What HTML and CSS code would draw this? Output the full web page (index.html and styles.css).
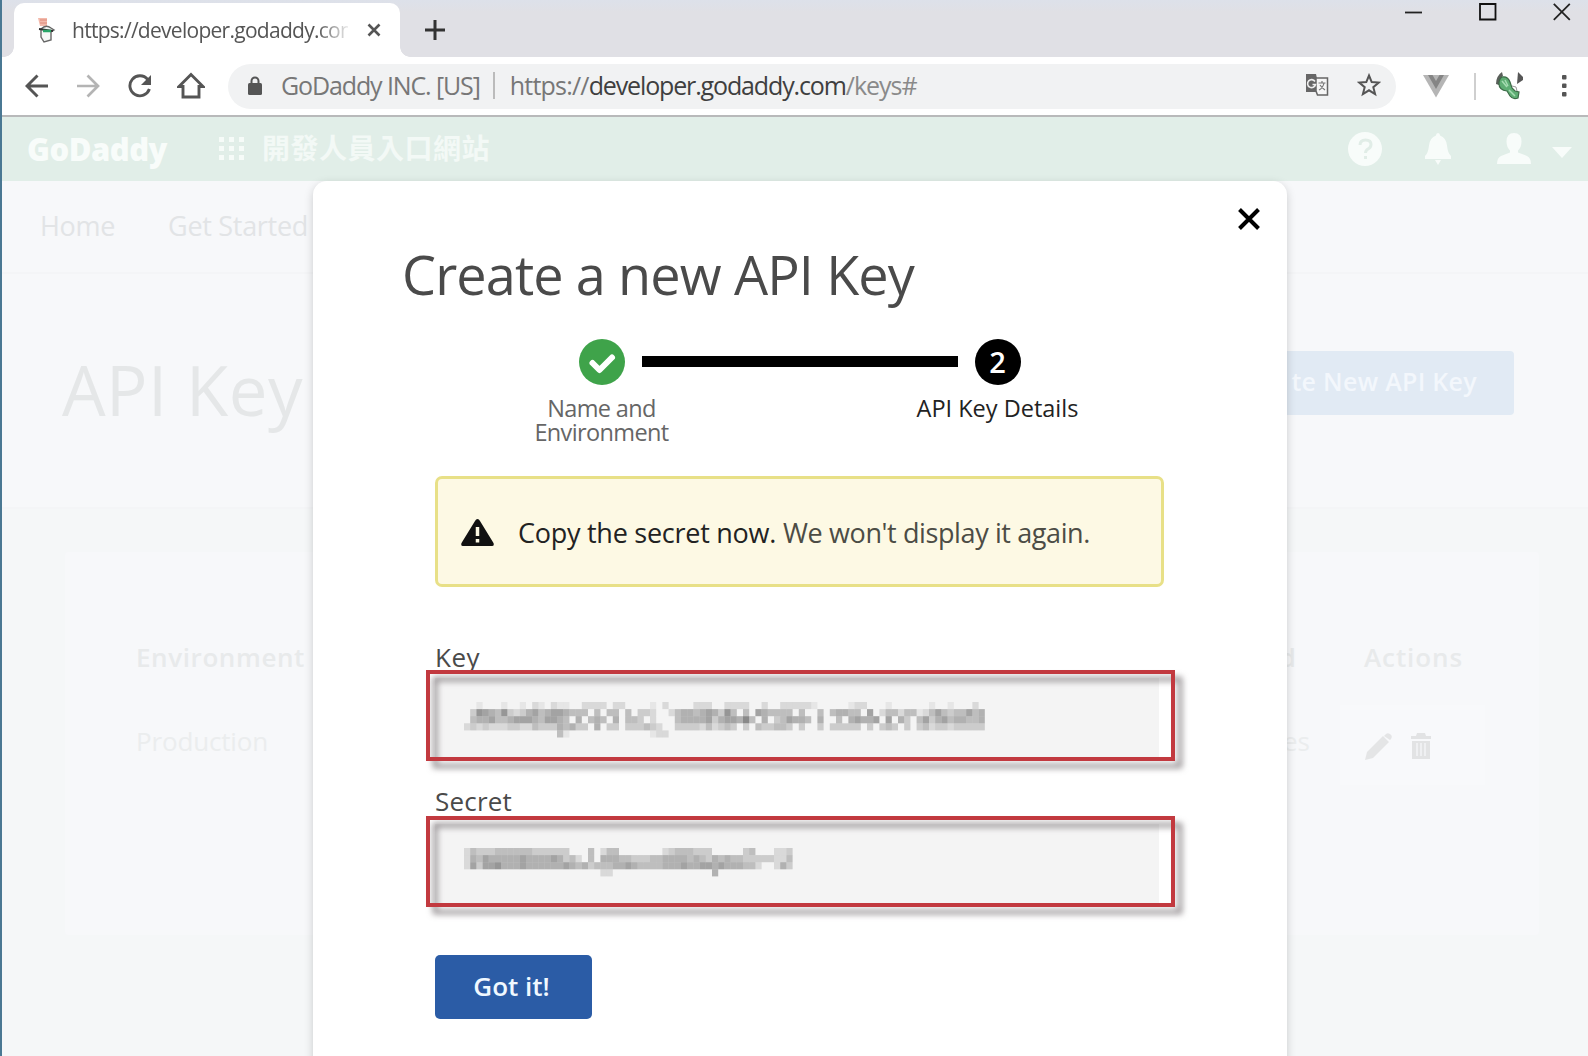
FILE: index.html
```html
<!DOCTYPE html>
<html lang="zh-Hant">
<head>
<meta charset="utf-8">
<title>GoDaddy Developer Portal</title>
<link rel="stylesheet" href="styles.css">
</head>
<body>
<div class="tabstrip">
  <div class="tab">
    <svg class="favicon" width="20" height="26" viewBox="0 0 20 26"><path d="M2 1h9v8H4z" fill="#f3b9ab"/><path d="M4 3h7M4 6h7" stroke="#dd8a7a"/><path d="M5 12q5-5 10-1l3 2-3 2v8l-7 2-3-5z" fill="#f4f7f5" stroke="#666" stroke-width="1.400"/><path d="M3 12l14 2" stroke="#333" stroke-width="2"/><path d="M7 14h8" stroke="#27a567" stroke-width="2.500"/></svg>
    <span class="tab-title">https://developer.godaddy.com</span>
    <svg class="tab-close" width="14" height="14" viewBox="0 0 14 14"><path d="M1.500 1.500l11 11M12.500 1.500l-11 11" stroke="#555" stroke-width="2.600"/></svg>
  </div>
  <svg class="tab-new" width="20" height="20" viewBox="0 0 20 20"><path d="M10 0v20M0 10h20" stroke="#333" stroke-width="3"/></svg>
  <div class="winctl">
    <svg width="18" height="18" viewBox="0 0 18 18"><path d="M0 9.500h17" stroke="#222" stroke-width="1.800"/></svg>
    <svg width="18" height="18" viewBox="0 0 18 18"><path d="M1 1h15.500v15.500H1z" fill="none" stroke="#111" stroke-width="1.800"/></svg>
    <svg width="18" height="18" viewBox="0 0 18 18"><path d="M.8.8l16 16M16.800.8l-16 16" stroke="#222" stroke-width="1.800"/></svg>
  </div>
</div>
<div class="toolbar">
  <svg class="nav-back" width="24" height="24" viewBox="0 0 24 24" fill="none" stroke="#555" stroke-width="2.900"><path d="M23 12H3M12.500 1.500L2 12l10.500 10.500"/></svg>
  <svg class="nav-fwd" width="24" height="24" viewBox="0 0 24 24" fill="none" stroke="#b4b4b4" stroke-width="2.700"><path d="M1 12h20M11.500 1.500L22 12 11.500 22.500"/></svg>
  <svg class="nav-reload" width="24" height="24" viewBox="0 0 24 24"><path d="M19.700 5.500A10 10 0 1 0 21.400 15" fill="none" stroke="#555" stroke-width="2.900"/><path d="M23 1v10H13z" fill="#555"/></svg>
  <svg class="nav-home" width="28" height="28" viewBox="0 0 28 28"><path d="M2 14.500L14 2.500l12 12h-4V25H6V14.500z" fill="none" stroke="#555" stroke-width="2.900"/></svg>
  <div class="omnibox">
    <svg class="lock" width="14" height="19" viewBox="0 0 14 19"><path d="M3.500 9V5a3.500 3.500 0 0 1 7 0v4" fill="none" stroke="#555" stroke-width="2"/><rect y="7" width="14" height="12" rx="1.500" fill="#555"/></svg>
    <span class="t-org">GoDaddy INC. [US]</span>
    <i class="org-sep"></i>
    <span class="url"><span class="t-sch">https://</span><b class="t-dom">developer.godaddy.com</b><span class="t-path">/keys#</span></span>
    <svg class="translate" width="24" height="24" viewBox="0 0 24 24"><path d="M1 1h10l4 18H1z" fill="#666"/><path d="M11 5h11.500v17H12.500L11 18z" fill="#f6f6f6" stroke="#666" stroke-width="1.500"/><path d="M10 8.500a4 4 0 1 0 .5 3H7.500" fill="none" stroke="#eee" stroke-width="1.600"/><path d="M13.500 10h7M17 8v2M19 10q-1 5-5 7M15 12q2 3 5 5" fill="none" stroke="#777" stroke-width="1.200"/></svg>
    <svg class="star" width="24" height="24" viewBox="0 0 24 24"><path d="M12 2.500l2.700 6.600 7.100.5-5.500 4.600 1.800 6.900-6.100-3.800-6.100 3.800 1.800-6.900-5.500-4.600 7.100-.5z" fill="none" stroke="#555" stroke-width="2"/></svg>
  </div>
  <svg class="vue" width="26" height="24" viewBox="0 0 26 24"><path d="M0 1h26L13 23.500z" fill="#b5b5b5"/><path d="M5 1h4.500L13 7l3.500-6H21l-8 14z" fill="#858585"/></svg>
  <i class="tool-sep"></i>
  <svg class="avatar" width="28" height="28" viewBox="0 0 28 28"><path d="M0 12Q0 4 6 0l1 4Q3 7 3 13z" fill="#5a5f5a"/><path d="M6 5q6-1 8 5l2 6 3 3 4 1-1 6q-5 2-8-2l-3-5Q3 18 3 12q0-5 3-7z" fill="#5fae74" stroke="#3d6b48" stroke-width="1.200"/><path d="M6 9l5 6M9 8l3 6M13 18l6 6" stroke="#a6dcb2" stroke-width="1.500"/><path d="M22 0l5 5v3l-6 4z" fill="#565656"/><path d="M16 14l4 1 1 4" stroke="#999" fill="none"/></svg>
  <svg class="kebab" width="5" height="22" viewBox="0 0 5 22" fill="#555"><rect y="0" width="4.500" height="4.500" rx="1"/><rect y="8.500" width="4.500" height="4.500" rx="1"/><rect y="17" width="4.500" height="4.500" rx="1"/></svg>
</div>
<div class="page">
  <header class="site-head">
    <span class="brand">GoDaddy</span>
    <svg class="apps" width="25" height="24" viewBox="0 0 25 24" fill="#f6fbf8"><path d="M0 0h5v5H0zM10 0h5v5h-5zM20 0h5v5h-5zM0 9h5v5H0zM10 9h5v5h-5zM20 9h5v5h-5zM0 18h5v5H0zM10 18h5v5h-5zM20 18h5v5h-5z"/></svg>
    <span class="portal">開發人員入口網站</span>
    <svg class="help" width="34" height="34" viewBox="0 0 34 34"><circle cx="17" cy="17" r="17" fill="#f8fcfa"/><path d="M12 13q0-5 5.500-5t5.500 4.500q0 3-3 4.500-2.500 1.500-2.500 4M17.500 24v3" fill="none" stroke="#e1ede7" stroke-width="3"/></svg>
    <svg class="bell" width="26" height="32" viewBox="0 0 26 32" fill="#f8fcfa"><path d="M13 0q2 0 2 2.500 6 2 7 10 .8 8 4 10.500V26H0v-3q3.200-2.500 4-10.500 1-8 7-10Q11 0 13 0zM10 27h6l-3 5z"/></svg>
    <svg class="person" width="34" height="32" viewBox="0 0 34 32" fill="#f8fcfa"><path d="M17 0q7.500 0 7.500 8.500 0 5.500-3.500 9v2l9 3.500q4 2 4 8H0q0-6 4-8l9-3.500v-2q-3.500-3.500-3.500-9Q9.500 0 17 0z"/></svg>
    <svg class="caret" width="20" height="11" viewBox="0 0 20 11"><path d="M0 0h20L10 11z" fill="#f8fcfa"/></svg>
  </header>
  <nav class="site-nav"><span>Home</span><span>Get Started</span></nav>
  <section class="hero">
    <h1>API Key</h1>
    <div class="create">te New API Key</div>
  </section>
  <section class="listing">
    <div class="card">
      <div class="row row-head"><b class="t-env">Environment</b><b class="c2">Created</b><b class="t-act">Actions</b></div>
      <div class="row"><span class="t-prod">Production</span><span class="c2 c2b">2 minutes</span>
        <span class="acts">
          <svg width="27" height="27" viewBox="0 0 27 27" fill="#e4e5e6"><path d="M0 27l2-8L18 3l6 6L8 25zM20 2q2-3 5-1t1 5l-1 1-6-4z"/></svg>
          <svg width="20" height="26" viewBox="0 0 20 26"><path d="M0 3h5l1-3h8l1 3h5v3H0zM1 8h18v18H1z" fill="#e2e3e4"/><path d="M6 10v13M10 10v13M14 10v13" stroke="#f4f5f6" stroke-width="1.500"/></svg>
        </span></div>
    </div>
  </section>

  <div class="modal">
    <svg class="close" width="22" height="22" viewBox="0 0 22 22"><path d="M1.500 1.500l19 19M20.500 1.500l-19 19" stroke="#000" stroke-width="4"/></svg>
    <h2>Create a new API Key</h2>
    <div class="steps">
      <div class="step done">
        <svg width="46" height="46" viewBox="0 0 46 46"><circle cx="23" cy="23" r="23" fill="#3fa34a"/><path d="M13.500 24l7 7L33 18.500" fill="none" stroke="#fff" stroke-width="6" stroke-linecap="round" stroke-linejoin="round"/></svg>
        <span>Name and<br>Environment</span>
      </div>
      <div class="bar"></div>
      <div class="step now"><span class="num">2</span><span>API Key Details</span></div>
    </div>
    <div class="alert">
      <svg width="33" height="27" viewBox="0 0 33 27"><path d="M16.500 0q1.500 0 2.500 2l13.500 22q1 3-1.500 3H2q-2.500 0-1.500-3L14 2q1-2 2.500-2z" fill="#111"/><path d="M16.500 8v9M16.500 20v3.500" stroke="#fdf9e4" stroke-width="3.500"/></svg>
      <p><b>Copy the secret now.</b><span>We won't display it again.</span></p>
    </div>
    <label class="t-key">Key</label>
    <div class="field"><svg class="mosaic" id="key" width="522" height="37"></svg></div>
    <label class="t-sec">Secret</label>
    <div class="field"><svg class="mosaic" id="secret" width="522" height="37"></svg></div>
    <button class="got">Got it!</button>
  </div>
</div>
<script src="app.js"></script>
</body>
</html>
```
FILE: styles.css
```css
* { box-sizing: border-box; }
body {
  margin: 0; width: 1588px; height: 1056px; overflow: hidden;
  display: flex; flex-direction: column;
  border-left: 2px solid #4a7893; background: #fff;
  font-family: "Open Sans", "Noto Sans", "Noto Sans CJK TC", sans-serif;
  color: #444;
}
svg { flex: none; display: block; }
b { font-weight: 400; }
span, b, label { white-space: nowrap; }

/* Browser chrome */
.tabstrip { height: 57px; flex: none; display: flex; align-items: center; background: linear-gradient(#dde1ea, #e0e0e5 12px); padding-left: 12px; }
.tab { position: relative; align-self: flex-end; height: 54px; width: 386px; background: #fff; border-radius: 10px 10px 0 0; display: flex; align-items: center; }
.tab::before, .tab::after { content: ""; position: absolute; bottom: 0; width: 10px; height: 10px; }
.tab::before { left: -10px; background: radial-gradient(circle at 0 0, transparent 9.5px, #fff 10px); }
.tab::after { right: -10px; background: radial-gradient(circle at 100% 0, transparent 9.5px, #fff 10px); }
.favicon { margin-left: 22px; }
.tab-title { margin-left: 16px; width: 276px; overflow: hidden; font-size: 21px; letter-spacing: -.72px; color: #555; -webkit-mask-image: linear-gradient(90deg, #000 245px, transparent 280px); }
.tab-close { margin-left: 19px; }
.tab-new { margin: 3px 0 0 25px; }
.winctl { margin: 3px 17px 0 auto; align-self: flex-start; display: flex; gap: 56px; }
.toolbar { height: 60px; flex: none; display: flex; align-items: center; border-bottom: 2px solid #b8b9ba; }
.nav-back { margin-left: 23px; }
.nav-fwd { margin-left: 27px; }
.nav-reload { margin-left: 28px; }
.nav-home { margin-left: 25px; }
.omnibox { margin-left: 23px; width: 1168px; height: 45px; border-radius: 23px; background: #f1f2f3; display: flex; align-items: center; font-size: 25px; color: #777; padding-bottom: 2px; }
.lock { margin-left: 20px; }
.t-org { margin-left: 19px; letter-spacing: -1.12px; }
.org-sep { width: 2px; height: 27px; background: #bbb; margin-left: 13px; }
.url { margin-left: 15px; }
.t-sch { letter-spacing: -.79px; }
.t-dom { color: #3f3f3f; letter-spacing: -1.14px; }
.t-path { color: #8a8a8a; letter-spacing: -.99px; }
.translate { margin-left: auto; }
.star { margin: 0 15px 0 28px; }
.vue { margin-left: 27px; }
.tool-sep { width: 2px; height: 27px; background: #cfcfcf; margin-left: 25px; }
.avatar { margin-left: 20px; }
.kebab { margin-left: 38px; }

/* Page under the dialog */
.page { position: relative; flex: 1; overflow: hidden; display: flex; flex-direction: column; background: #f5f7f8; }
.site-head { height: 64px; flex: none; display: flex; align-items: center; background: #e1eee8; color: #f8fcfa; }
.brand { margin-left: 25px; width: 140px; font-size: 31px; font-weight: 800; letter-spacing: -.51px; line-height: 60px; }
.apps { margin-left: 52px; }
.portal { margin-left: 18px; font-size: 28px; font-weight: 700; letter-spacing: .5px; color: #f3f9f6; line-height: 60px; margin-top: -2px; }
.help { margin-left: auto; }
.bell { margin-left: 43px; }
.person { margin-left: 46px; }
.caret { margin: 6px 16px 0 21px; }
.site-nav { height: 91px; flex: none; background: #f7f8fa; display: flex; align-items: center; gap: 53px; padding: 0 0 3px 38px; font-size: 27px; letter-spacing: -.3px; color: #e2e4e6; }
.hero { height: 237px; flex: none; background: #f7f8fa; border: solid #f4f5f7; border-width: 2px 0; display: flex; align-items: center; padding: 0 74px 0 60px; }
.hero h1 { margin: -4px 0 0; font-size: 69px; font-weight: 400; letter-spacing: .44px; color: #e5e7e8; line-height: 90px; white-space: nowrap; }
.create { margin: -15px 0 0 auto; width: 330px; height: 64px; line-height: 61px; border-radius: 4px; background: #e1eaf4; color: #f3f7fc; font-size: 25px; font-weight: 600; letter-spacing: .3px; text-align: right; padding-right: 37px; white-space: nowrap; }
.listing { padding: 43px 49px 0 63px; }
.card { height: 383px; background: #f7f8fa; padding: 77px 0 0 71px; border-radius: 4px; }
.row { display: flex; height: 84px; font-size: 26px; line-height: 56px; color: #ebedee; }
.row b { font-weight: 600; color: #e8eaeb; }
.row .c2 { width: 130px; margin-left: auto; text-align: right; }
.row .c2b { width: 144px; margin-right: 30px; }
.t-env { letter-spacing: .6px; }
.t-prod { letter-spacing: -.16px; }
.t-act { margin: 0 76px 0 68px; letter-spacing: .9px; }
.acts { width: 145px; height: 80px; margin: -8px 54px 0 0; padding: 28px 0 0 25px; background: #f8f9fb; display: flex; gap: 19px; }

/* Dialog */
.modal { position: absolute; left: 311px; top: 64px; width: 974px; height: 900px; background: #fff; border-radius: 14px 14px 0 0; box-shadow: 0 3px 10px rgba(0,0,0,.18); padding: 50px 123px 0 122px; display: flex; flex-direction: column; align-items: flex-start; }
.close { position: absolute; right: 27px; top: 27px; }
.modal h2 { margin: 0 0 0 -33px; font-size: 54px; line-height: 87px; height: 86px; font-weight: 400; letter-spacing: -.88px; color: #4a4a4a; white-space: nowrap; }
.steps { align-self: stretch; height: 137px; margin-top: 22px; display: flex; justify-content: center; align-items: flex-start; }
.step { width: 46px; display: flex; flex-direction: column; align-items: center; font-size: 23.5px; line-height: 24px; text-align: center; color: #666; }
.step svg, .num { margin-bottom: 11px; }
.done { letter-spacing: -.62px; }
.now { color: #222; }
.num { flex: none; width: 46px; height: 46px; border-radius: 50%; background: #000; color: #fff; font-weight: 600; font-size: 29px; line-height: 45px; text-align: center; }
.bar { width: 316px; height: 11px; margin: 17px 17px 0; background: #000; }
.alert { width: 729px; height: 111px; border: 3px solid #e8e087; border-radius: 7px; background: #fdf9e4; display: flex; align-items: center; padding: 1px 0 0 23px; font-size: 27px; }
.alert p { margin: 0 0 0 24px; display: flex; gap: 7px; color: #4c4c45; letter-spacing: -.39px; }
.alert b { color: #222; font-weight: 500; letter-spacing: -.26px; }
.modal label { font-size: 26px; line-height: 40px; color: #4a4a4a; }
.modal .t-key { margin-top: 50px; height: 41px; letter-spacing: .48px; }
.modal .t-sec { margin-top: 23px; height: 43px; letter-spacing: .2px; }
.field { position: relative; width: 724px; height: 80px; background: #f4f4f4; padding: 24px 0 0 29px; }
.field::after { content: ""; box-sizing: border-box; position: absolute; left: -9px; top: -8px; width: 749px; height: 91px; border: 4px solid #c2393f; filter: drop-shadow(7px 7px 3px rgba(60,50,55,.6)); }
.mosaic { filter: blur(.7px); }
.got { margin-top: 51px; width: 157px; height: 64px; border: 0; border-radius: 5px; background: #2b5ca6; color: #f0f8ff; font: 600 26px/58px "Open Sans", sans-serif; padding: 0 4px 3px 0; }
```
FILE: app.js
```js
// Mosaic cells for the masked values: each digit is a grey level.
const masks = {
  key: [
    "001000100102102110022220220000102000022200222200200222221000001220001000000100100020010",
    "037654732356456654440404404033200245545653740406544440400404554406024424412464344645424",
    "045564456665466540504540504430200045555635665840503465540500405655606053046356455445545",
    "232322233224333545330503303334320033332423430304334430300303333303034303034233233333333",
    "000000000000000410000000000000122000000000000000000000000000000000000000000000000000000"],
  secret: [
    "24333444444333333000402440000000234443330000034000223",
    "25465555565555653420405554433344555545435454433333224",
    "26366755565555556545344455654444555655665655544200253",
    "00000000000000000000002200000000000000005000000000000"]
};
const w = 6.2, h = 7.1;
for (const [id, rows] of Object.entries(masks)) {
  let cells = "";
  rows.forEach((row, y) => [...row].forEach((level, x) => {
    if (+level && x < 84) cells += `<rect x="${x * w}" y="${y * h}" width="${w}" height="${h}" fill="#555" opacity="${level * .085}"/>`;
  }));
  document.getElementById(id).innerHTML = cells;
}
```
